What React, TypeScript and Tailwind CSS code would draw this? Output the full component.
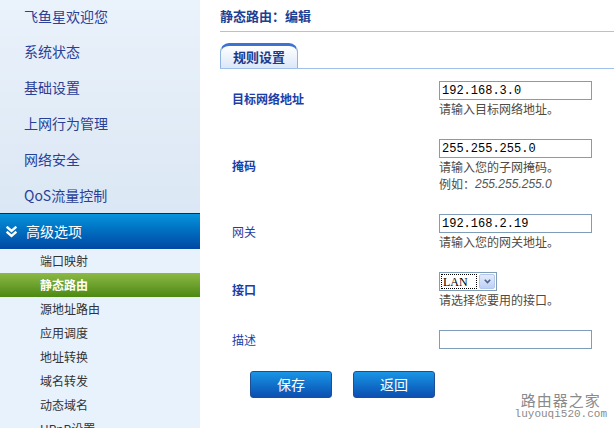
import React from 'react';

const topMenu = ['飞鱼星欢迎您', '系统状态', '基础设置', '上网行为管理', '网络安全', 'QoS流量控制'];
const subMenu = ['端口映射', '静态路由', '源地址路由', '应用调度', '地址转换', '域名转发', '动态域名', 'UPnP设置'];

const cjk = { fontFamily: '"Noto Sans CJK SC", "Liberation Sans", sans-serif' };
const mono = { fontFamily: '"Liberation Mono", "Noto Sans CJK SC", monospace' };

const DoubleChevron = () => (
  <svg width="11" height="12" viewBox="0 0 11 12" fill="none" stroke="white" strokeWidth="2.4" strokeLinecap="square">
    <path d="M1.5 1.5 L5.5 5 L9.5 1.5" />
    <path d="M1.5 6.5 L5.5 10 L9.5 6.5" />
  </svg>
);

const Sidebar = () => (
  <div className="w-[200px] h-[428px] shrink-0 flex flex-col overflow-hidden bg-[#e8f2fc]">
    <div className="shrink-0 flex flex-col bg-gradient-to-b from-[#eaf2fb] to-[#dbe7f4]">
      {topMenu.map((t, i) => (
        <div key={i} className={'shrink-0 flex items-center pl-6 text-[14px] text-[#2a3f96] ' + (i === 0 ? 'h-[33px]' : 'h-[36px]')}>
          {t}
        </div>
      ))}
    </div>
    <div className="shrink-0 h-px bg-[#1c2a3c]" />
    <div className="shrink-0 h-[35px] flex items-center gap-2 pl-[6px] bg-gradient-to-b from-[#0b93dc] to-[#0047a2] text-white text-[14px]">
      <DoubleChevron />
      <span className="pl-[1px]">高级选项</span>
    </div>
    <div className="shrink-0 flex flex-col">
      {subMenu.map((t, i) =>
        i === 1 ? (
          <div key={i} className="shrink-0 h-[24px] flex items-center pl-10 text-[12px] font-bold text-white bg-gradient-to-b from-[#8cba44] to-[#4c8810]">
            {t}
          </div>
        ) : (
          <div key={i} className="shrink-0 h-[24px] flex items-center pl-10 text-[12px] text-[#333]">
            {t}
          </div>
        )
      )}
    </div>
  </div>
);

const TextInput = ({ value }: { value: string }) => (
  <div className="w-[153px] h-[19px] border border-[#7f9db9] bg-white flex items-center px-[2px] text-[12px] text-black" style={mono}>
    {value}
  </div>
);

const Hint = ({ children }: { children: React.ReactNode }) => (
  <div className="h-[17px] flex items-center text-[12px] text-[#4e4a44]">{children}</div>
);

const Row = ({ label, bold, children }: { label: string; bold?: boolean; children: React.ReactNode }) => (
  <div className="flex items-center">
    <div className={'w-[219px] pl-3 text-[12px] text-[#1c3ea6] ' + (bold ? 'font-bold' : '')}>{label}</div>
    <div className="flex flex-col">{children}</div>
  </div>
);

export default function App() {
  return (
    <div className="w-[614px] h-[428px] flex overflow-hidden bg-white" style={cjk}>
      <Sidebar />
      <div className="flex-1 flex flex-col pl-5 relative">
        <div className="h-[31px] flex items-center text-[13px] font-bold text-[#1b3f94]">静态路由：编辑</div>
        <div className="h-px bg-[#a3c5ef]" />
        <div className="h-[11px]" />
        <div className="flex items-end">
          <div className="w-[78px] h-[25px] rounded-t-[9px] border border-b-0 border-[#8fb3e3] border-t-[3px] border-t-[#3c72d2] bg-gradient-to-b from-white to-[#dbe7f8] flex items-center justify-center text-[13px] font-bold text-[#1b3a8e]">
            规则设置
          </div>
        </div>
        <div className="h-px bg-[#9fc0ea]" />
        <div className="flex flex-col pt-[12px] gap-[22px]">
          <Row label="目标网络地址" bold>
            <TextInput value="192.168.3.0" />
            <Hint>请输入目标网络地址。</Hint>
          </Row>
          <Row label="掩码" bold>
            <TextInput value="255.255.255.0" />
            <Hint>请输入您的子网掩码。</Hint>
            <Hint>
              例如：<span className="italic text-[#555]" style={{ fontFamily: '"Liberation Sans", sans-serif' }}>255.255.255.0</span>
            </Hint>
          </Row>
          <Row label="网关">
            <TextInput value="192.168.2.19" />
            <Hint>请输入您的网关地址。</Hint>
          </Row>
          <Row label="接口" bold>
            <div className="w-[58px] h-[19px] border border-[#7f9db9] bg-white flex items-center p-[1px]">
              <div className="flex-1 h-full border border-dotted border-black flex items-center pl-[1px] text-[12px]" style={{ fontFamily: '"Liberation Serif", serif' }}>
                LAN
              </div>
              <div className="w-[16px] h-full ml-[2px] rounded-[2px] border border-[#b4c8ee] bg-gradient-to-b from-[#e4ecfc] to-[#bcd0f6] flex items-center justify-center">
                <svg width="7" height="5" viewBox="0 0 7 5" fill="none" stroke="#4d6185" strokeWidth="1.6">
                  <path d="M0.8 0.8 L3.5 3.6 L6.2 0.8" />
                </svg>
              </div>
            </div>
            <Hint>请选择您要用的接口。</Hint>
          </Row>
          <Row label="描述">
            <TextInput value="" />
          </Row>
        </div>
        <div className="flex gap-[21px] pl-[30px] pt-[22px]">
          <button className="w-[82px] h-[27px] rounded-[3px] border border-[#1e4f95] bg-gradient-to-b from-[#1b95e6] to-[#0d4fb0] text-white text-[14px]">保存</button>
          <button className="w-[82px] h-[27px] rounded-[3px] border border-[#1e4f95] bg-gradient-to-b from-[#1b95e6] to-[#0d4fb0] text-white text-[14px]">返回</button>
        </div>
        <div className="absolute right-[7px] bottom-[8px] flex flex-col items-center text-[#8a8a8a]">
          <span className="text-[15px] leading-[16px] tracking-[1px]">路由器之家</span>
          <span className="text-[11px] leading-[11px] mt-[1px]" style={mono}>luyouqi520.com</span>
        </div>
      </div>
    </div>
  );
}
